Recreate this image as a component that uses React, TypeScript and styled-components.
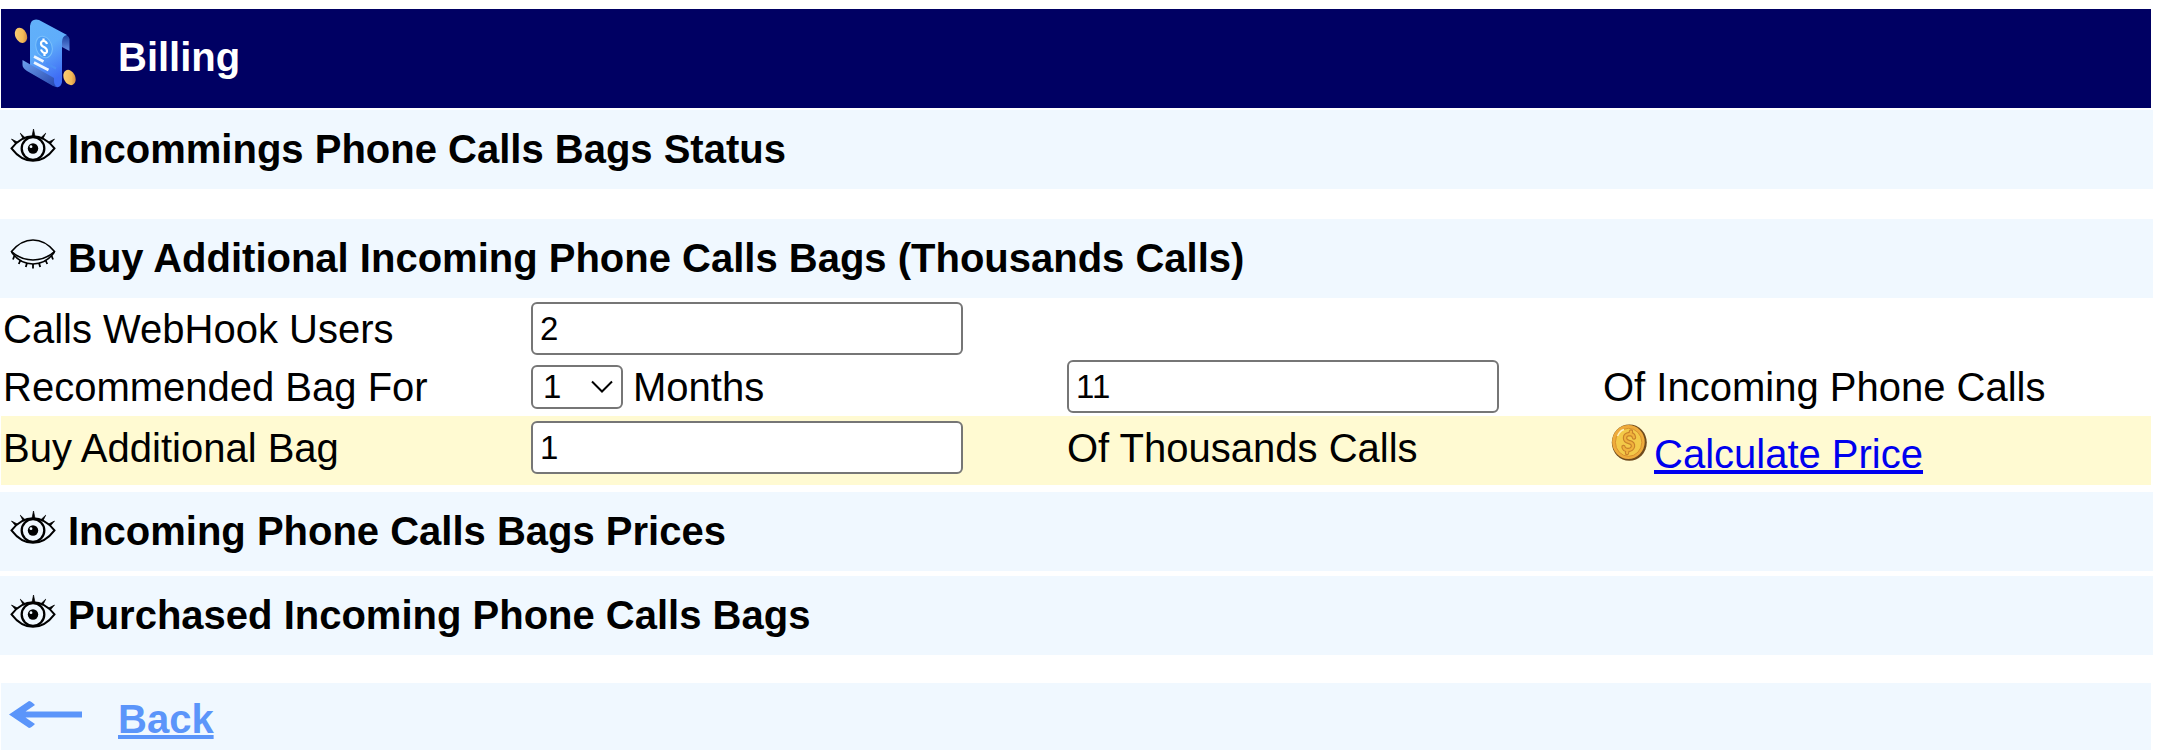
import React, { useState } from "react";
import styled, { createGlobalStyle } from "styled-components";

const GlobalStyle = createGlobalStyle`
  *, *::before, *::after { box-sizing: border-box; }
  body {
    margin: 0;
    background: #ffffff;
    color: #000000;
    font-family: "Liberation Sans", Arial, sans-serif;
    font-size: 40px;
    line-height: 46px;
  }
`;

const Page = styled.main`
  padding: 9px 7px 0 0;
`;

const Header = styled.header`
  display: grid;
  grid-template-columns: 105px 1fr;
  align-items: start;
  min-height: 99px;
  margin: 0 2px 2px 1px;
  padding: 9px 0 0 12px;
  background: #000063;
  color: #ffffff;
`;

const Title = styled.h1`
  margin: 16px 0 0;
  font-size: inherit;
  font-weight: bold;
`;

const Section = styled.section<{ $after: number }>`
  margin-bottom: ${(p) => p.$after}px;
`;

const SectionHeading = styled.h2`
  margin: 0;
  font-size: inherit;
  background: #f0f8ff;
`;

const Toggle = styled.button`
  display: flex;
  align-items: flex-start;
  gap: 12px;
  width: 100%;
  padding: 16px 10px 17px;
  border: 0;
  background: none;
  color: inherit;
  font: inherit;
  font-weight: bold;
  text-align: left;
  cursor: pointer;

  svg {
    flex: none;
    margin-top: 3px;
  }
`;

const Form = styled.form`
  margin: 0 2px 0 1px;
`;

const Row = styled.div<{ $top: number; $bottom: number; $highlight?: boolean }>`
  display: grid;
  grid-template-columns: calc(25% - 9px) calc(25% - 1px) calc(25% - 1px) 1fr;
  padding: ${(p) => p.$top}px 0 ${(p) => p.$bottom}px 2px;
  background: ${(p) => (p.$highlight ? "#fffad2" : "transparent")};
`;

const Cell = styled.div`
  display: flex;
  align-items: center;
  gap: 10px;
  height: 53px;
`;

const TextInput = styled.input`
  width: 432px;
  max-width: 100%;
  height: 53px;
  padding: 0 7px;
  border: 2px solid #767676;
  border-radius: 6px;
  background: #ffffff;
  color: #000000;
  font-family: inherit;
  font-size: 33px;
`;

const SelectBox = styled.div`
  display: grid;
  align-items: center;

  select,
  svg {
    grid-area: 1 / 1;
  }

  svg {
    justify-self: end;
    margin-right: 10px;
    pointer-events: none;
  }
`;

const MonthSelect = styled.select`
  appearance: none;
  width: 92px;
  height: 44px;
  padding: 0 10px;
  border: 2px solid #767676;
  border-radius: 6px;
  background: #ffffff;
  color: #000000;
  font-family: inherit;
  font-size: 33px;
`;

const PriceCell = styled.div`
  display: flex;
  align-items: flex-start;
  gap: 7px;
  height: 56px;
  padding: 3px 0 0 8px;
`;

const Link = styled.a`
  color: #0000ee;
  text-decoration: underline;
  text-decoration-thickness: 4px;
  text-underline-offset: 2px;
`;

const PriceLink = styled(Link)`
  align-self: flex-end;
`;

const Footer = styled.footer`
  display: grid;
  grid-template-columns: 109px 1fr;
  align-items: start;
  margin: 0 2px 0 1px;
  padding: 13px 0 8px 8px;
  background: #f0f8ff;
`;

const BackLink = styled(Link)`
  justify-self: start;
  color: #5b95fa;
  font-weight: bold;
`;

const BillIcon = () => (
  <svg width="64" height="70" viewBox="0 0 64 70" aria-hidden="true">
    <defs>
      <linearGradient id="paper" x1="0" y1="0" x2="0.35" y2="1">
        <stop offset="0" stopColor="#62b1f9" />
        <stop offset="0.5" stopColor="#5fadfb" />
        <stop offset="1" stopColor="#3f6df5" />
      </linearGradient>
      <linearGradient id="curl" x1="0" y1="0" x2="0" y2="1">
        <stop offset="0" stopColor="#173a9c" />
        <stop offset="1" stopColor="#6690e6" />
      </linearGradient>
      <linearGradient id="fold" x1="0" y1="0" x2="1" y2="1">
        <stop offset="0" stopColor="#6da0ee" />
        <stop offset="1" stopColor="#2545ad" />
      </linearGradient>
      <linearGradient id="gold" x1="0" y1="0" x2="1" y2="0.7">
        <stop offset="0" stopColor="#fbd27c" />
        <stop offset="0.7" stopColor="#f3ba58" />
        <stop offset="1" stopColor="#cf8740" />
      </linearGradient>
    </defs>
    <path d="M47 17 Q55 15 56.500 21 V33 L49 29 V22Z" fill="url(#curl)" />
    <path
      d="M17 8 Q18 0 26 2 L54 17 Q49 18 49 24 V64 Q48 70 43 69 L17 54Z"
      fill="url(#paper)"
    />
    <path d="M9.500 42 L41 60 V63 Q41 67 44 69 L40 68 L14 53 Q9.500 50 9.500 47Z" fill="url(#fold)" />
    <ellipse cx="31" cy="29" rx="8" ry="11" transform="rotate(-18 31 29)" fill="#4c9df5" stroke="#7bc0fb" />
    <path
      d="M34 26 Q33 23 30.500 23 Q28 23 28 25.500 Q28 28 31 29 Q34 30.500 34 33 Q34 35.500 31.500 35 Q29 34.500 28 31.500 M30.500 20.500 V23 M31.500 35 V38"
      fill="none"
      stroke="#ffffff"
      strokeWidth="2.200"
    />
    <path d="M21 38.500 L30.500 43.500 M21 44.500 L35.500 52" stroke="#eef6ff" strokeWidth="2.600" />
    <path d="M33 45 L43 50.500" stroke="#4d8ff6" strokeWidth="2" />
    <ellipse cx="8" cy="17.300" rx="5.700" ry="8" transform="rotate(-25 8 17.300)" fill="url(#gold)" />
    <ellipse cx="56.500" cy="59.500" rx="5.700" ry="8" transform="rotate(-25 56.500 59.500)" fill="url(#gold)" />
  </svg>
);

const OpenEyeIcon = () => (
  <svg width="46" height="34" viewBox="0 0 46 34" fill="none" stroke="#000000" strokeWidth="2" aria-hidden="true">
    <path d="M1.500 19.300 Q11 7.300 23 7.300 T44.500 19.300 Q35 31.800 23 31.800 T1.500 19.300Z" />
    <circle cx="23" cy="19.500" r="11.300" strokeWidth="2.300" />
    <circle cx="23" cy="19.500" r="5.200" fill="#000000" stroke="none" />
    <circle cx="21" cy="17.700" r="1.400" fill="#f0f8ff" stroke="none" />
    <path
      d="M22 7.500 L23.500 0 L25 7.500Z M13.200 10 L10.300 4.200 L15.200 8.800Z M32.800 10 L35.700 4.200 L30.800 8.800Z M5.500 14.800 L1.500 10 L7.300 13Z M40.500 14.800 L44.500 10 L38.700 13Z"
      fill="#000000"
      stroke="#000000"
      strokeWidth="0.700"
    />
  </svg>
);

const ClosedEyeIcon = () => (
  <svg width="46" height="34" viewBox="0 0 46 34" fill="none" stroke="#000000" strokeWidth="1.600" aria-hidden="true">
    <path d="M1.500 13.500 Q11 2 23 2 T44.500 13.500 Q35 22 23 22 T1.500 13.500Z" />
    <path d="M1.500 14 Q10 26 23 26 T44.500 14" />
    <path
      d="M4.500 17.500 L3 21.500 M10.500 22 L8.800 26 M17 25 L15.800 29 M23 26 V30.500 M29 25 L30.200 29 M35.500 22 L37.200 26 M41.500 17.500 L43 21.500"
      strokeWidth="1.800"
    />
  </svg>
);

const CoinIcon = () => (
  <svg width="36" height="37" viewBox="0 0 36 37" aria-hidden="true">
    <ellipse cx="18.300" cy="18.600" rx="17.500" ry="18.200" fill="#6f4a1c" />
    <ellipse cx="17.400" cy="18" rx="16.300" ry="17" fill="#efab3c" />
    <ellipse cx="17.600" cy="18.300" rx="13.200" ry="14" fill="#f3c948" stroke="#d8912e" />
    <path d="M6.500 12 Q9 6.500 13 5.500" fill="none" stroke="#fff0b8" strokeWidth="1.600" />
    <g fill="none" strokeLinecap="round">
      <path
        d="M23 13.500 Q22.500 10 18.500 10 Q14 10.500 14 14 Q14 17 18 18 Q22.500 19 22 22.500 Q21 26 17 26 Q13 26 12.500 23 M19.500 10 L20 7.500 M16.500 26 L16 29"
        stroke="#c9822b"
        strokeWidth="4.400"
      />
      <path
        d="M23 13.500 Q22.500 10 18.500 10 Q14 10.500 14 14 Q14 17 18 18 Q22.500 19 22 22.500 Q21 26 17 26 Q13 26 12.500 23 M19.500 10 L20 7.500 M16.500 26 L16 29"
        stroke="#f0b23b"
        strokeWidth="2.200"
      />
    </g>
  </svg>
);

const ArrowIcon = () => (
  <svg width="73" height="37" viewBox="0 0 73 37" aria-hidden="true">
    <path
      d="M0 18.500 L20 5 Q22 5 26 9 L16.500 15.500 H73 V21.500 H16.500 L26 28 Q22 32 20 32Z"
      fill="#5b95fa"
    />
  </svg>
);

const ChevronIcon = () => (
  <svg width="22" height="14" viewBox="0 0 22 14" fill="none" stroke="#000000" strokeWidth="2" aria-hidden="true">
    <path d="M1 1.500 L11 11.500 L21 1.500" />
  </svg>
);

type CollapsibleProps = {
  title: string;
  after?: number;
  startOpen?: boolean;
  children?: React.ReactNode;
};

const Collapsible = ({ title, after = 0, startOpen = false, children }: CollapsibleProps) => {
  const [open, setOpen] = useState(startOpen);
  return (
    <Section $after={after}>
      <SectionHeading>
        <Toggle type="button" aria-expanded={open} onClick={() => setOpen(!open)}>
          {open ? <ClosedEyeIcon /> : <OpenEyeIcon />}
          {title}
        </Toggle>
      </SectionHeading>
      {open && children}
    </Section>
  );
};

export default function App() {
  const [users, setUsers] = useState("2");
  const [months, setMonths] = useState("1");
  const [recommended, setRecommended] = useState("11");
  const [additional, setAdditional] = useState("1");

  return (
    <>
      <GlobalStyle />
      <Page>
        <Header>
          <BillIcon />
          <Title>Billing</Title>
        </Header>

        <Collapsible title="Incommings Phone Calls Bags Status" after={30} />

        <Collapsible title="Buy Additional Incoming Phone Calls Bags (Thousands Calls)" after={7} startOpen>
          <Form onSubmit={(e) => e.preventDefault()}>
            <Row $top={4} $bottom={4}>
              <Cell>
                <label htmlFor="users">Calls WebHook Users</label>
              </Cell>
              <Cell>
                <TextInput id="users" value={users} onChange={(e) => setUsers(e.target.value)} />
              </Cell>
            </Row>
            <Row $top={1} $bottom={3}>
              <Cell>
                <label htmlFor="months">Recommended Bag For</label>
              </Cell>
              <Cell>
                <SelectBox>
                  <MonthSelect id="months" value={months} onChange={(e) => setMonths(e.target.value)}>
                    {["1", "2", "3", "6", "12"].map((m) => (
                      <option key={m}>{m}</option>
                    ))}
                  </MonthSelect>
                  <ChevronIcon />
                </SelectBox>
                <label htmlFor="months">Months</label>
              </Cell>
              <Cell>
                <TextInput id="recommended" value={recommended} onChange={(e) => setRecommended(e.target.value)} />
              </Cell>
              <Cell>
                <label htmlFor="recommended">Of Incoming Phone Calls</label>
              </Cell>
            </Row>
            <Row $top={5} $bottom={8} $highlight>
              <Cell>
                <label htmlFor="additional">Buy Additional Bag</label>
              </Cell>
              <Cell>
                <TextInput id="additional" value={additional} onChange={(e) => setAdditional(e.target.value)} />
              </Cell>
              <Cell>
                <label htmlFor="additional">Of Thousands Calls</label>
              </Cell>
              <PriceCell>
                <CoinIcon />
                <PriceLink href="#price">Calculate Price</PriceLink>
              </PriceCell>
            </Row>
          </Form>
        </Collapsible>

        <Collapsible title="Incoming Phone Calls Bags Prices" after={5} />
        <Collapsible title="Purchased Incoming Phone Calls Bags" after={28} />

        <Footer>
          <ArrowIcon />
          <BackLink href="#back">Back</BackLink>
        </Footer>
      </Page>
    </>
  );
}
